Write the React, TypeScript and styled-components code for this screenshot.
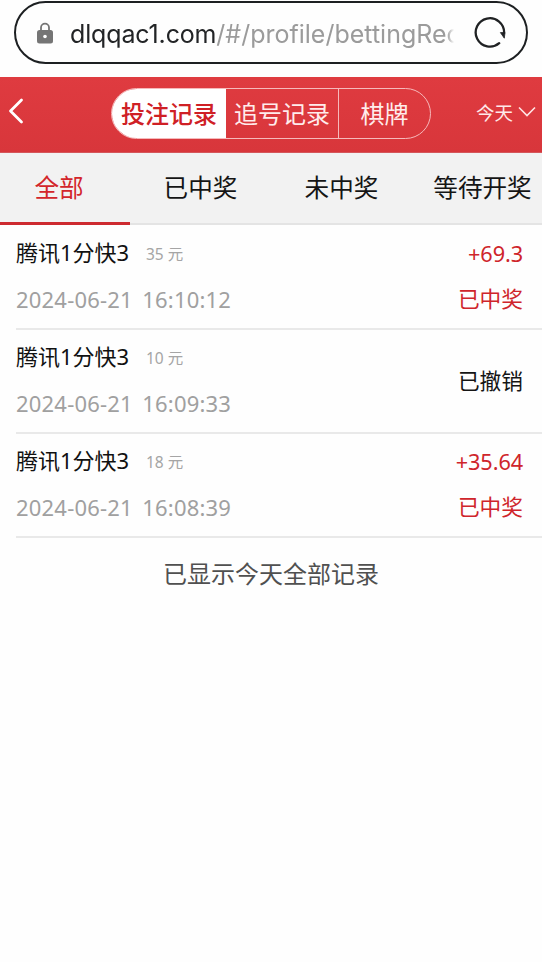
import React from 'react';
import styled, { createGlobalStyle } from 'styled-components';

const GlobalStyle = createGlobalStyle`
  * { box-sizing: border-box; }
  body {
    margin: 0;
    background: #fefefe;
    font-family: "Noto Sans", "Noto Sans CJK SC", sans-serif;
    color: #111;
  }
`;

const Screen = styled.div`
  width: 542px;
  height: 962px;
  overflow: hidden;
  background: #fefefe;
`;

const BrowserBar = styled.div`
  height: 77px;
  padding: 1px 14px 0;
`;

const AddressField = styled.div`
  display: flex;
  align-items: center;
  height: 63px;
  border: 2px solid #1d2022;
  border-radius: 32px;
  padding: 0 18px 0 20px;
`;

const Address = styled.div`
  width: 387px;
  margin: 3px 0 0 16px;
  font-family: Inter, sans-serif;
  white-space: nowrap;
  font-size: 25px;
  line-height: 40px;
  letter-spacing: 0;
  color: #9b9b9b;
  mask-image: linear-gradient(to right, #000 377px, transparent 384px);
`;

const Host = styled.span`
  color: #222426;
  letter-spacing: -0.15px;
`;

const ReloadSlot = styled.div`
  display: flex;
  margin-left: 15px;
`;

const Header = styled.header`
  display: flex;
  align-items: center;
  height: 76px;
  padding: 0 6px 0 7px;
  background: linear-gradient(#df3b40, #d8363b);
  border-bottom: 1px solid #d4575b;
  color: #fff;
`;

const BackButton = styled.div`
  display: flex;
  width: 104px;
  padding-bottom: 7px;
`;

const Segments = styled.div`
  display: flex;
  width: 320px;
  height: 51px;
  margin-top: -2px;
  border: 1px solid #f6b9bb;
  border-radius: 26px;
  overflow: hidden;
`;

const Segment = styled.div<{ $width: number; $active?: boolean }>`
  flex: 0 0 ${p => p.$width}px;
  font-size: 24px;
  font-weight: ${p => (p.$active ? 500 : 400)};
  line-height: 49px;
  text-align: center;
  white-space: nowrap;
  color: ${p => (p.$active ? '#cf2025' : '#ffecec')};
  background: ${p => (p.$active ? '#fff' : 'transparent')};
  & + & + & { border-left: 1px solid #f6b9bb; }
`;

const DayPicker = styled.div`
  display: flex;
  align-items: center;
  gap: 5px;
  margin-left: auto;
  padding-bottom: 3px;
  font-size: 18.5px;
  line-height: 30px;
  color: #ffe9e9;

  svg { margin-bottom: 3px; }
`;

const Tabs = styled.nav`
  display: flex;
  height: 72px;
  background: #f2f2f2;
`;

const Tab = styled.div<{ $width: number; $shift?: number; $active?: boolean }>`
  flex: 0 0 ${p => p.$width}px;
  padding-right: ${p => p.$shift ?? 0}px;
  border-bottom: ${p => (p.$active ? '3px solid #cd2b30' : '2px solid #e4e4e4')};
  color: ${p => (p.$active ? '#d3262b' : '#151515')};
  font-size: 24.6px;
  line-height: 70px;
  text-align: center;
  white-space: nowrap;
`;

const Records = styled.div`
  padding-top: 1px;
`;

const Row = styled.div`
  display: flex;
  justify-content: space-between;
  height: 104px;
  margin-left: 16px;
  padding-right: 19px;
  border-bottom: 2px solid #e9e9e9;
`;

const Details = styled.div`
  padding-top: 4px;
`;

const Title = styled.div`
  display: flex;
  align-items: center;
  height: 42px;
`;

const Game = styled.span`
  width: 130px;
  font-size: 22px;
  white-space: nowrap;
`;

const Stake = styled.span`
  padding-top: 4px;
  font-size: 15.5px;
  color: #a5a5a5;
`;

const Timestamp = styled.div`
  height: 50px;
  padding-top: 2px;
  font-size: 22px;
  line-height: 50px;
  letter-spacing: 0.2px;
  word-spacing: 3.5px;
  white-space: nowrap;
  color: #a0a0a0;
`;

const Result = styled.div<{ $won: boolean }>`
  display: flex;
  flex-direction: column;
  align-items: flex-end;
  justify-content: center;
  padding-bottom: 2px;
  font-size: 21.7px;
  line-height: 45px;
  color: ${p => (p.$won ? '#cf252b' : '#151515')};
`;

const Amount = styled.span`
  letter-spacing: -0.1px;
`;

const EndNote = styled.p`
  margin: 0;
  padding-top: 16px;
  font-size: 24px;
  line-height: 40px;
  text-align: center;
  color: #505050;
`;

const records = [
  { stake: '35 元', time: '2024-06-21 16:10:12', amount: '+69.3', status: '已中奖' },
  { stake: '10 元', time: '2024-06-21 16:09:33', amount: '', status: '已撤销' },
  { stake: '18 元', time: '2024-06-21 16:08:39', amount: '+35.64', status: '已中奖' },
];

const LockIcon = () => (
  <svg width="18" height="22" viewBox="0 0 18 22">
    <path d="M5 9V5.6a4 4 0 0 1 8 0V9" fill="none" stroke="#757575" strokeWidth="1.8" />
    <rect x="1" y="8" width="16" height="13.5" rx="2.5" fill="#757575" />
    <circle cx="9" cy="14.5" r="1.8" fill="#fff" />
  </svg>
);

const ReloadIcon = () => (
  <svg width="34" height="34" viewBox="0 0 34 34">
    <path d="M27.2 27.2A14.2 14.2 0 1 1 32.1 17" fill="none" stroke="#202224" strokeWidth="2.3" strokeLinecap="round" />
    <path d="M28.4 16.6h4.6l-.7 5.6z" fill="#202224" stroke="#202224" strokeWidth=".8" strokeLinejoin="round" />
  </svg>
);

export default function App() {
  return (
    <Screen>
      <GlobalStyle />
      <BrowserBar>
        <AddressField>
          <LockIcon />
          <Address><Host>dlqqac1.com</Host>/#/profile/bettingRec</Address>
          <ReloadSlot><ReloadIcon /></ReloadSlot>
        </AddressField>
      </BrowserBar>
      <Header>
        <BackButton>
          <svg width="18" height="26" viewBox="0 0 18 26">
            <path d="M14.5 2 3.5 13l11 11" fill="none" stroke="#fff" strokeWidth="2.8" strokeLinecap="round" strokeLinejoin="round" />
          </svg>
        </BackButton>
        <Segments>
          <Segment $width={114} $active>投注记录</Segment>
          <Segment $width={112}>追号记录</Segment>
          <Segment $width={92}>棋牌</Segment>
        </Segments>
        <DayPicker>
          今天
          <svg width="18" height="12" viewBox="0 0 18 12">
            <path d="m1 1.5 8 8 8-8" fill="none" stroke="#ffe4e4" strokeWidth="1.6" />
          </svg>
        </DayPicker>
      </Header>
      <Tabs>
        <Tab $width={130} $shift={12} $active>全部</Tab>
        <Tab $width={141}>已中奖</Tab>
        <Tab $width={141}>未中奖</Tab>
        <Tab $width={141}>等待开奖</Tab>
      </Tabs>
      <Records>
        {records.map(r => (
          <Row key={r.time}>
            <Details>
              <Title><Game>腾讯1分快3</Game><Stake>{r.stake}</Stake></Title>
              <Timestamp>{r.time}</Timestamp>
            </Details>
            <Result $won={r.amount !== ''}>
              {r.amount && <Amount>{r.amount}</Amount>}
              <span>{r.status}</span>
            </Result>
          </Row>
        ))}
      </Records>
      <EndNote>已显示今天全部记录</EndNote>
    </Screen>
  );
}
